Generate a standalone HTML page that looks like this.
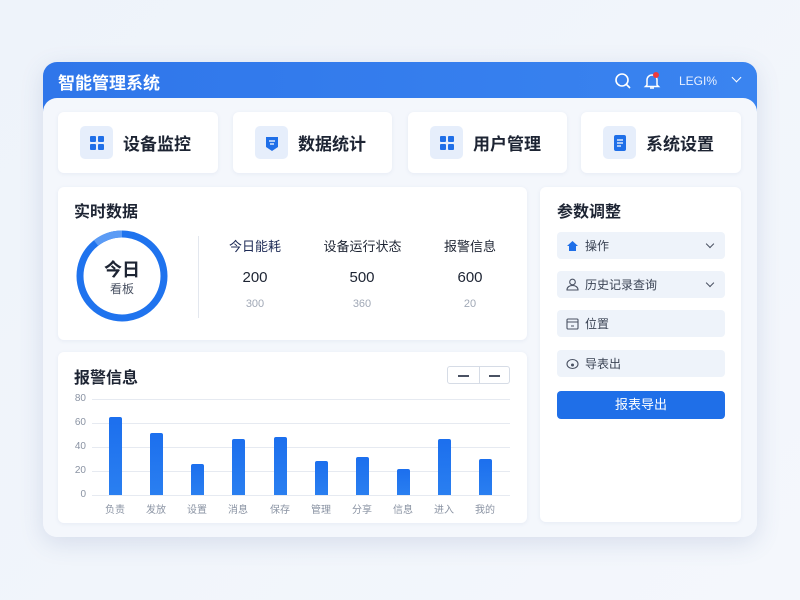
<!DOCTYPE html>
<html><head><meta charset="utf-8"><style>
*{margin:0;padding:0;box-sizing:border-box}
body{width:800px;height:600px;background:linear-gradient(135deg,#eef3fa,#f4f7fc);font-family:"Liberation Sans","Noto Sans CJK SC",sans-serif;position:relative;overflow:hidden;color:#1d2433}
.abs{position:absolute}
.outer{left:43px;top:62px;width:714px;height:475px;border-radius:14px;background:#f3f6fb;box-shadow:0 6px 24px rgba(60,90,150,.15);overflow:hidden}
.hdr{left:0;top:0;width:714px;height:50px;background:linear-gradient(90deg,#2f76ea,#3a84f0)}
.body{left:0;top:36px;width:714px;height:440px;background:#f4f7fc;border-radius:14px 14px 0 0}
.card{background:#fff;border-radius:6px;box-shadow:0 1px 4px rgba(60,90,150,.08)}
.tc{top:112px;height:61px;display:flex;align-items:center;padding-left:22px;font-size:17px;font-weight:bold;color:#1d2433}
.ic{width:33px;height:33px;border-radius:5px;background:#e6eefb;margin-right:10px;display:flex;align-items:center;justify-content:center}
.ttl{font-size:16px;font-weight:bold}
.inp{left:557px;width:168px;height:27px;background:#eef3fa;border-radius:4px;font-size:12px;color:#3a4354;display:flex;align-items:center;padding-left:9px}
.chev{position:absolute;right:12px;top:9px;width:6px;height:6px;border-right:1.5px solid #4a5263;border-bottom:1.5px solid #4a5263;transform:rotate(45deg)}
.bar{position:absolute;width:13px;background:linear-gradient(#1c6fee,#2a7ff0);border-radius:2px 2px 0 0}
.xl{position:absolute;top:501px;font-size:10px;color:#8a93a3;width:40px;text-align:center}
.yl{position:absolute;left:62px;font-size:10px;color:#8a93a3;width:24px;text-align:right}
.gl{position:absolute;left:92px;width:418px;height:1px;background:#e6eaf1}
</style></head><body>
<div class="abs outer">
 <div class="abs hdr"></div>
 <div class="abs body"></div>
</div>
<div class="abs" style="left:58px;top:69px;font-size:17px;font-weight:bold;color:#fff">智能管理系统</div>
<svg class="abs" style="left:614px;top:72px" width="18" height="18" viewBox="0 0 18 18"><circle cx="8" cy="8" r="6" fill="none" stroke="#fff" stroke-width="1.6"/><path d="M12.5 12.5L16 16" stroke="#fff" stroke-width="1.6"/></svg>
<svg class="abs" style="left:643px;top:71px" width="18" height="20" viewBox="0 0 18 20"><path d="M4 14V9a5 5 0 0 1 10 0v5l1.5 1.5h-13z" fill="none" stroke="#fff" stroke-width="1.5"/><path d="M7 17h4" stroke="#fff" stroke-width="1.5"/><circle cx="13" cy="4" r="3" fill="#f03a3a"/></svg>
<div class="abs" style="left:679px;top:74px;font-size:12px;color:#e8f0ff">LEGI%</div>
<div class="abs" style="left:733px;top:74px;width:7px;height:7px;border-right:1.5px solid #fff;border-bottom:1.5px solid #fff;transform:rotate(45deg)"></div>

<div class="abs card tc" style="left:58px;width:160px"><div class="ic"><svg width="16" height="16"><rect x="1" y="1" width="6" height="6" rx="1" fill="#1f6fe8"/><rect x="9" y="1" width="6" height="6" rx="1" fill="#1f6fe8"/><rect x="1" y="9" width="6" height="6" rx="1" fill="#1f6fe8"/><rect x="9" y="9" width="6" height="6" rx="1" fill="#1f6fe8"/></svg></div>设备监控</div>
<div class="abs card tc" style="left:233px;width:159px"><div class="ic"><svg width="16" height="18"><path d="M2 3h12v10l-6 4-6-4z" fill="#1f6fe8"/><path d="M5 7h6M6 10h4" stroke="#fff" stroke-width="1.3"/></svg></div>数据统计</div>
<div class="abs card tc" style="left:408px;width:159px"><div class="ic"><svg width="16" height="16"><rect x="1" y="1" width="6" height="6" rx="1" fill="#1f6fe8"/><rect x="9" y="1" width="6" height="6" rx="1" fill="#1f6fe8"/><rect x="1" y="9" width="6" height="6" rx="1" fill="#1f6fe8"/><rect x="9" y="9" width="6" height="6" rx="1" fill="#1f6fe8"/></svg></div>用户管理</div>
<div class="abs card tc" style="left:581px;width:160px"><div class="ic"><svg width="14" height="18"><rect x="1" y="1" width="12" height="16" rx="2" fill="#1f6fe8"/><path d="M4 6h6M4 9h6M4 12h4" stroke="#fff" stroke-width="1.3"/></svg></div>系统设置</div>

<div class="abs card" style="left:58px;top:187px;width:469px;height:153px"></div>
<div class="abs ttl" style="left:74px;top:198px">实时数据</div>
<svg class="abs" style="left:76px;top:230px" width="92" height="92" viewBox="0 0 92 92"><circle cx="46" cy="46" r="42" fill="none" stroke="#1f73ee" stroke-width="7"/><path d="M46 4A42 42 0 0 0 20 13" fill="none" stroke="#5b9bf5" stroke-width="7"/></svg>
<div class="abs" style="left:92px;top:256px;width:60px;text-align:center;font-size:18px;font-weight:bold">今日</div>
<div class="abs" style="left:92px;top:280px;width:60px;text-align:center;font-size:12px;color:#4a5263">看板</div>
<div class="abs" style="left:198px;top:236px;width:1px;height:82px;background:#e3e7ee"></div>
<div class="abs" style="left:215px;top:236px;width:80px;text-align:center;font-size:13px;color:#1d2a55">今日能耗</div>
<div class="abs" style="left:310px;top:236px;width:105px;text-align:center;font-size:13px">设备运行状态</div>
<div class="abs" style="left:430px;top:236px;width:80px;text-align:center;font-size:13px">报警信息</div>
<div class="abs" style="left:215px;top:269px;width:80px;text-align:center;font-size:15px">200</div>
<div class="abs" style="left:322px;top:269px;width:80px;text-align:center;font-size:15px">500</div>
<div class="abs" style="left:430px;top:269px;width:80px;text-align:center;font-size:15px">600</div>
<div class="abs" style="left:215px;top:298px;width:80px;text-align:center;font-size:11px;color:#a0a8b6">300</div>
<div class="abs" style="left:322px;top:298px;width:80px;text-align:center;font-size:11px;color:#a0a8b6">360</div>
<div class="abs" style="left:430px;top:298px;width:80px;text-align:center;font-size:11px;color:#a0a8b6">20</div>

<div class="abs card" style="left:58px;top:352px;width:469px;height:171px"></div>
<div class="abs ttl" style="left:74px;top:364px">报警信息</div>
<div class="abs" style="left:447px;top:366px;width:63px;height:18px;border:1px solid #d6dce6;border-radius:3px;background:#fff"><div class="abs" style="left:31px;top:0;width:1px;height:16px;background:#d6dce6"></div><div class="abs" style="left:10px;top:8px;width:11px;height:1.5px;background:#4a5263"></div><div class="abs" style="left:41px;top:8px;width:11px;height:1.5px;background:#4a5263"></div></div>
<div class="gl" style="top:399px"></div><div class="gl" style="top:423px"></div><div class="gl" style="top:447px"></div><div class="gl" style="top:471px"></div><div class="gl" style="top:495px"></div>
<div class="yl" style="top:393px">80</div><div class="yl" style="top:417px">60</div><div class="yl" style="top:441px">40</div><div class="yl" style="top:465px">20</div><div class="yl" style="top:489px">0</div>
<div class="bar" style="left:109px;top:417px;height:78px"></div>
<div class="bar" style="left:150px;top:433px;height:62px"></div>
<div class="bar" style="left:191px;top:464px;height:31px"></div>
<div class="bar" style="left:232px;top:439px;height:56px"></div>
<div class="bar" style="left:274px;top:437px;height:58px"></div>
<div class="bar" style="left:315px;top:461px;height:34px"></div>
<div class="bar" style="left:356px;top:457px;height:38px"></div>
<div class="bar" style="left:397px;top:469px;height:26px"></div>
<div class="bar" style="left:438px;top:439px;height:56px"></div>
<div class="bar" style="left:479px;top:459px;height:36px"></div>
<div class="xl" style="left:95px">负责</div><div class="xl" style="left:136px">发放</div><div class="xl" style="left:177px">设置</div><div class="xl" style="left:218px">消息</div><div class="xl" style="left:260px">保存</div><div class="xl" style="left:301px">管理</div><div class="xl" style="left:342px">分享</div><div class="xl" style="left:383px">信息</div><div class="xl" style="left:424px">进入</div><div class="xl" style="left:465px">我的</div>

<div class="abs card" style="left:540px;top:187px;width:201px;height:335px"></div>
<div class="abs ttl" style="left:557px;top:198px">参数调整</div>
<div class="abs inp" style="top:232px"><svg width="13" height="12" style="margin-right:6px"><path d="M6.5 1L1 6h2v5h7V6h2z" fill="#1f6fe8"/></svg>操作<div class="chev"></div></div>
<div class="abs inp" style="top:271px"><svg width="13" height="13" style="margin-right:6px"><circle cx="6.5" cy="4" r="2.8" fill="none" stroke="#4a5263" stroke-width="1.1"/><path d="M1 12c0-3 2.5-4.5 5.5-4.5S12 9 12 12z" fill="none" stroke="#4a5263" stroke-width="1.1"/></svg>历史记录查询<div class="chev"></div></div>
<div class="abs inp" style="top:310px"><svg width="13" height="12" style="margin-right:6px"><rect x="1" y="1" width="11" height="10" rx="1" fill="none" stroke="#4a5263" stroke-width="1.1"/><path d="M1 4h11M5 8h3" stroke="#4a5263" stroke-width="1.1"/></svg>位置</div>
<div class="abs inp" style="top:350px"><svg width="13" height="12" style="margin-right:6px"><ellipse cx="6.5" cy="6" rx="5.5" ry="4.5" fill="none" stroke="#4a5263" stroke-width="1.1"/><circle cx="6.5" cy="7" r="1.5" fill="#4a5263"/></svg>导表出</div>
<div class="abs" style="left:557px;top:391px;width:168px;height:28px;background:#1f6fe8;border-radius:4px;color:#fff;font-size:13px;text-align:center;line-height:28px">报表导出</div>
</body></html>
